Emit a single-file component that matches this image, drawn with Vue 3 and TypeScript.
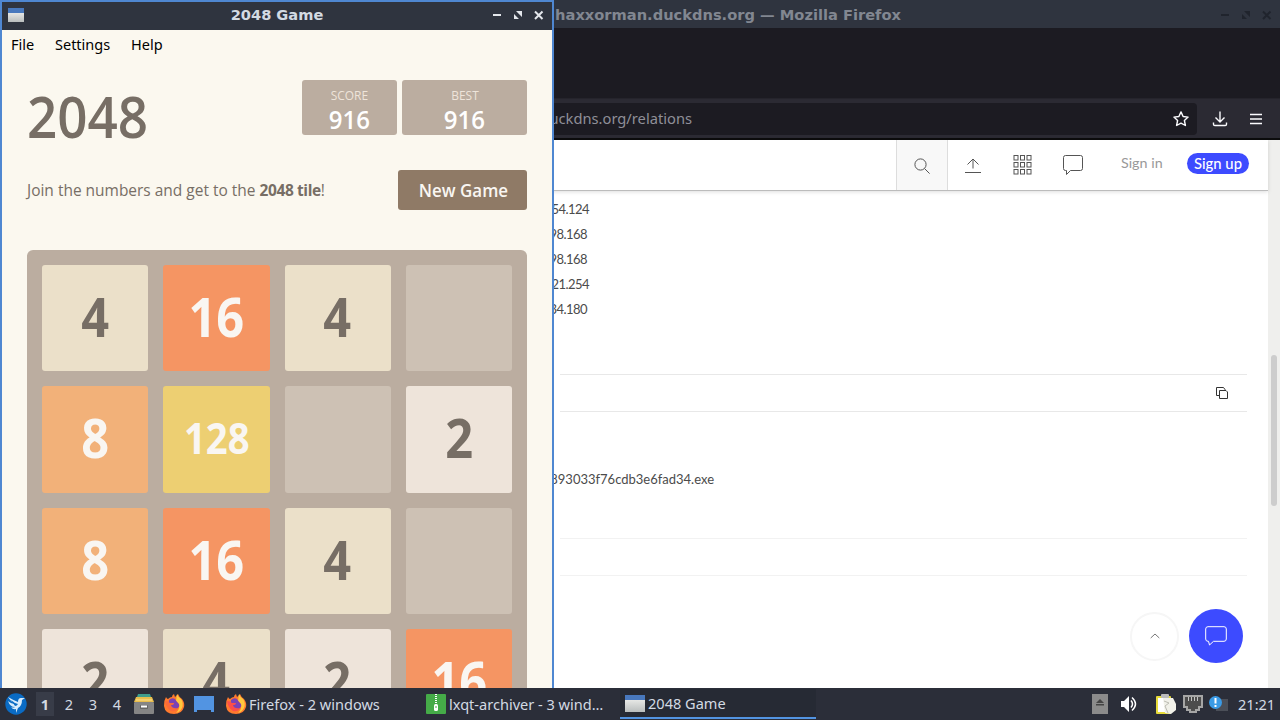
<script setup lang="ts">
interface Tile {
  id: number;
  value: number;
}

const values = [
  4, 16, 4, 0,
  8, 128, 0, 2,
  8, 16, 4, 0,
  2, 4, 2, 16,
];
const tiles: Tile[] = values.map((value, id) => ({ id, value }));

const menus = ["File", "Settings", "Help"];
const addresses = [
  "192.168.54.124",
  "192.168.98.168",
  "192.168.98.168",
  "192.168.21.254",
  "192.168.34.180",
];
const desktops = [1, 2, 3, 4];
</script>

<template>
  <div class="desktop">
    <div class="stage">
      <section class="firefox">
        <header class="ff-title">
          <span class="ff-title-text">haxxorman.duckdns.org — Mozilla Firefox</span>
          <svg class="controls dim" viewBox="0 0 54 12">
            <path d="M1 6h8" />
            <path class="solid" d="M24 2h6v6zM22 5v5h5z" />
            <path d="M43 2.500l7.500 7.500M50.500 2.500L43 10" />
          </svg>
        </header>
        <div class="ff-tabs" />
        <div class="ff-toolbar">
          <div class="ff-url">
            <span class="ff-address">duckdns.org/relations</span>
            <svg class="ff-star" viewBox="0 0 16 16">
              <path d="M8 .9l2.1 4.6 5 .6-3.7 3.4 1 5L8 12.1l-4.4 2.4 1-5L.9 6.1l5-.6z" />
            </svg>
          </div>
          <svg class="ff-download" viewBox="0 0 16 16">
            <path d="M8 .5v10M3.500 6.500L8 11l4.500-4.500M1.500 11.500v1.700q0 1.300 1.300 1.300h10.400q1.300 0 1.300-1.300v-1.700" />
          </svg>
          <svg class="ff-menu" viewBox="0 0 14 12">
            <path d="M1 1.500h12M1 6h12M1 10.500h12" />
          </svg>
        </div>
        <div class="page">
          <div class="page-main">
            <nav class="page-nav">
              <div class="nav-search">
                <svg class="icon16" viewBox="0 0 16 16">
                  <circle cx="6.500" cy="6.500" r="5.600" />
                  <path d="M10.600 10.600l5 5" />
                </svg>
              </div>
              <svg class="nav-upload" viewBox="0 0 16 16">
                <path d="M8 11.500V2.500M2.500 7.500L8 2l5.500 5.500M0 15.500h16" />
              </svg>
              <svg class="nav-grid" viewBox="0 0 19 20">
                <template v-for="y in 3" :key="y">
                  <rect v-for="x in 3" :key="x" :x="x * 6.500 - 5.500" :y="y * 7 - 6.500" width="4" height="4.500" />
                </template>
              </svg>
              <svg class="nav-chat" viewBox="0 0 20 20">
                <path d="M2.500.5h15q2 0 2 2v11q0 2-2 2H7.500L3.500 19.500v-4h-1q-2 0-2-2v-11q0-2 2-2z" />
              </svg>
              <span class="sign-in">Sign in</span>
              <span class="sign-up">Sign up</span>
            </nav>
            <ul class="ips">
              <li v-for="(ip, i) in addresses" :key="i" :class="`ip-${i}`">
                {{ ip }}
              </li>
            </ul>
            <div class="row row-copy">
              <svg class="copy" viewBox="0 0 12 12">
                <path d="M3 8.500H.5V.5h7l1.500 2v1M3.500 3.500h6.500l1.500 1.500v6.500h-8z" />
              </svg>
            </div>
            <div class="hash">893033f76cdb3e6fad34.exe</div>
            <div class="row row-last" />
            <div class="fabs">
              <div class="fab-top">
                <svg viewBox="0 0 10 6">
                  <path d="M.7 5L5 1l4.300 4" />
                </svg>
              </div>
              <div class="fab-chat">
                <svg viewBox="0 0 22 20">
                  <path d="M3 .7h16q2.300 0 2.300 2.300v10q0 2.300-2.300 2.300H8.500L4.500 19l-1-3.700H3Q.7 15.300.7 13V3Q.7.700 3 .7z" />
                </svg>
              </div>
            </div>
          </div>
          <div class="scrollbar">
            <div class="thumb" />
          </div>
        </div>
      </section>

      <section class="game">
        <header class="game-title">
          <i class="win-icon" />
          <span class="game-name">2048 Game</span>
          <svg class="controls" viewBox="0 0 54 12">
            <path d="M1 6h8" />
            <path class="solid" d="M24 2h6v6zM22 5v5h5z" />
            <path d="M43 2.500l7.500 7.500M50.500 2.500L43 10" />
          </svg>
        </header>
        <div class="menubar">
          <span v-for="menu in menus" :key="menu" :class="`menu-${menu.toLowerCase()}`">{{ menu }}</span>
        </div>
        <div class="game-body">
          <div class="heading">
            <h1>2048</h1>
            <div class="score">
              <span class="score-label">SCORE</span>
              <span class="score-value">916</span>
            </div>
            <div class="score best">
              <span class="score-label">BEST</span>
              <span class="score-value">916</span>
            </div>
          </div>
          <div class="above-game">
            <p>Join the numbers and get to the <b>2048 tile</b>!</p>
            <button><span>New Game</span></button>
          </div>
          <div class="board">
            <div v-for="tile in tiles" :key="tile.id" class="tile" :class="`tile-${tile.value}`">
              <span v-if="tile.value">{{ tile.value }}</span>
            </div>
          </div>
        </div>
      </section>
    </div>

    <footer class="taskbar">
      <svg class="bird" viewBox="0 0 22 22">
        <circle cx="11" cy="11" r="10.700" fill="#0a6bc4" />
        <path d="M3 4q3 5 8 7-5 0-8-3 2 6 7 6-2 1-4 0 2 3 5 2v4l2-5q4-2 4-8l3-2-4 0q-3 0-3 4-5-2-10-5z" fill="#d9ecfc" />
        <path d="M6 7q3 3 7 4-1 2-3 2-2-3-4-6z" fill="#0a6bc4" />
      </svg>
      <div class="desktops">
        <span v-for="n in desktops" :key="n" :class="{ current: n === 1 }">{{ n }}</span>
      </div>
      <svg class="cabinet" viewBox="0 0 20 20">
        <path d="M4 0h12l1 3H3z" fill="#3f9d8c" />
        <path d="M2 3h16l2 5H0z" fill="#e8bd4d" />
        <path d="M2 5h16v2H2z" fill="#f4d06f" />
        <rect y="8" width="20" height="12" rx="1" fill="#858585" />
        <rect x="6" y="11" width="8" height="4" rx="1" fill="#666" />
        <rect x="7" y="11.500" width="6" height="2" fill="#fff" />
      </svg>
      <svg class="fox" viewBox="0 0 22 22">
        <path d="M3 4q1 2 2 2 2-2 4-2 0-2 2-3l1 3 3-3q1 3 4 5 3 4 2 8-2 7-10 7-9 0-10-8Q.5 8 3 4z" fill="#ff7a2e" />
        <path d="M14 1q1 3 4 5 3 4 1 9-2 4-6 5 4-4 3-8-1-3-3-4z" fill="#ffc93e" />
        <path d="M6 7q3-3 6-1l2 3q4 3 1 6-3 3-7 0-3-3-2-8z" fill="#7b42b4" />
        <path d="M2 8q3 0 5 2l4 0q0 2-3 2 1 4 7 3-2 4-7 3-5-3-6-10z" fill="#fa6a3a" />
      </svg>
      <svg class="show-desktop" viewBox="0 0 20 16">
        <path d="M0 0h20v16h-3v-2H3v2H0z" fill="#5294e2" />
      </svg>
      <div class="task task-fox">
        <svg class="fox" viewBox="0 0 22 22">
          <path d="M3 4q1 2 2 2 2-2 4-2 0-2 2-3l1 3 3-3q1 3 4 5 3 4 2 8-2 7-10 7-9 0-10-8Q.5 8 3 4z" fill="#ff7a2e" />
          <path d="M14 1q1 3 4 5 3 4 1 9-2 4-6 5 4-4 3-8-1-3-3-4z" fill="#ffc93e" />
          <path d="M6 7q3-3 6-1l2 3q4 3 1 6-3 3-7 0-3-3-2-8z" fill="#7b42b4" />
          <path d="M2 8q3 0 5 2l4 0q0 2-3 2 1 4 7 3-2 4-7 3-5-3-6-10z" fill="#fb4f4a" />
        </svg>
        <span>Firefox - 2 windows</span>
      </div>
      <div class="task task-archiver">
        <svg class="archive" viewBox="0 0 20 20">
          <rect width="20" height="20" rx="1" fill="#45ab48" />
          <path d="M10 0v10" stroke="#fff" stroke-width="2" stroke-dasharray="1 1" />
          <rect x="8" y="10" width="4" height="7" rx="1.500" fill="#fff" />
          <path d="M9.500 12h1v2h-1z" fill="#45ab48" />
        </svg>
        <span>lxqt-archiver - 3 wind…</span>
      </div>
      <div class="task task-game">
        <i class="win-icon big" />
        <span>2048 Game</span>
      </div>
      <div class="tray">
        <svg class="eject" viewBox="0 0 16 20">
          <rect width="16" height="20" fill="#8b8b8b" />
          <path d="M4 9l4-4 4 4zM4 10h8v1.500H4z" fill="#444" />
        </svg>
        <svg class="volume" viewBox="0 0 16 16">
          <path d="M0 5h3l5-5v16l-5-5H0z" fill="#fff" />
          <path d="M10 4.500q3 3.500 0 7M11 1.500q7 6.500 0 13" fill="none" stroke="#fff" stroke-width="1.500" />
        </svg>
        <svg class="clipboard" viewBox="0 0 20 20">
          <rect y="2" width="15" height="18" rx="1" fill="#e8dc3a" />
          <rect x="2" y="4" width="11" height="14" fill="#fff" />
          <rect x="5" width="8" height="4" rx="1" fill="#bbb" />
          <path d="M7 4h10l3 6v6l-5 4-6-1z" fill="#f1f1e9" />
          <path d="M8 7l5 2-4 3 3 7" fill="none" stroke="#bdbdb4" />
        </svg>
        <svg class="network" viewBox="0 0 20 18">
          <path d="M1 1h18v11h-3v3h-3v2H7v-2H4v-3H1z" fill="#4c4c4c" stroke="#a5a5a5" stroke-width="2" />
          <path d="M5.500 2v4M8.500 2v4M11.500 2v4M14.500 2v4" stroke="#c4c4c4" />
        </svg>
        <svg class="updates" viewBox="0 0 20 16">
          <rect x="7" y="3" width="12" height="12" fill="#4b4f58" />
          <circle cx="6.500" cy="6.500" r="6.500" fill="#3b9be6" />
          <path d="M6.500 2v5.500M6.500 9v2" stroke="#fff" stroke-width="2" />
        </svg>
        <span class="clock">21:21</span>
      </div>
    </footer>
  </div>
</template>

<style>
body {
  margin: 0;
  overflow: hidden;
}
</style>

<style scoped>
.desktop {
  display: flex;
  flex-direction: column;
  width: 1280px;
  height: 720px;
  overflow: hidden;
  font-family: "Noto Sans", sans-serif;
}

.desktop svg {
  display: block;
  flex: none;
}

.stage {
  position: relative;
  height: 688px;
  overflow: hidden;
}

/* Firefox window */
.firefox {
  position: absolute;
  top: 0;
  left: 540px;
  display: flex;
  flex-direction: column;
  width: 740px;
  height: 688px;
  background: #fff;
}

.ff-title {
  display: flex;
  align-items: center;
  justify-content: space-between;
  box-sizing: border-box;
  height: 28px;
  padding: 2px 6px 0 0;
  background: #2f343f;
}

.ff-title-text {
  display: flex;
  justify-content: flex-end;
  width: 361px;
  color: #828791;
  font: bold 14.650px/26px "DejaVu Sans", sans-serif;
  white-space: nowrap;
}

.controls {
  width: 54px;
  height: 12px;
  fill: none;
  stroke: #e4e7ec;
  stroke-width: 2;
}

.controls .solid {
  fill: #e4e7ec;
  stroke: none;
}

.controls.dim {
  stroke: #20242d;
}

.controls.dim .solid {
  fill: #20242d;
}

.ff-tabs {
  height: 70px;
  background: #1c1b22;
}

.ff-toolbar {
  display: flex;
  align-items: center;
  box-sizing: border-box;
  height: 42px;
  border-top: 1px solid #25242c;
  border-bottom: 2px solid #0c0c0d;
  background: #2b2a33;
}

.ff-url {
  display: flex;
  align-items: center;
  justify-content: space-between;
  box-sizing: border-box;
  width: 657px;
  height: 32px;
  padding-right: 8px;
  border-radius: 0 4px 4px 0;
  background: #1c1b22;
}

.ff-address {
  display: flex;
  justify-content: flex-end;
  width: 152px;
  margin-bottom: 2px;
  color: #8f8f98;
  font-size: 14.700px;
  white-space: nowrap;
}

.ff-star,
.ff-download,
.ff-menu {
  width: 16px;
  height: 16px;
  fill: none;
  stroke: #fbfbfe;
  stroke-width: 1.400;
  stroke-linejoin: round;
}

.ff-download {
  margin-left: 15px;
}

.ff-menu {
  width: 14px;
  height: 12px;
  margin-left: 21px;
}

.page {
  display: flex;
  flex: 1;
}

.page-main {
  position: relative;
  width: 728px;
  color: #4b4b4b;
  font-family: Lato, sans-serif;
}

.page-nav {
  display: flex;
  align-items: center;
  height: 50px;
  border-bottom: 1px solid #bcbcbc;
  box-shadow: 0 1px 4px #0002;
  fill: none;
  stroke: #555;
  stroke-width: 1;
}

.nav-search {
  display: flex;
  align-items: center;
  justify-content: center;
  width: 50px;
  height: 50px;
  margin-left: 356px;
  border-right: 1px solid #ddd;
  border-left: 1px solid #ddd;
  background: #f8f8f8;
}

.icon16 {
  width: 16px;
  height: 16px;
  margin-top: 2px;
}

.nav-upload {
  width: 16px;
  height: 16px;
  margin-left: 17px;
}

.nav-grid {
  width: 19px;
  height: 20px;
  margin-left: 32px;
}

.nav-chat {
  width: 20px;
  height: 20px;
  margin-left: 31px;
}

.sign-in {
  width: 42px;
  margin: 0 0 4px 38px;
  color: #999;
  font-size: 14.300px;
  line-height: 20px;
  white-space: nowrap;
}

.sign-up {
  width: 62px;
  height: 21px;
  margin: 0 0 4px 24px;
  border-radius: 11px;
  background: #3d4bff;
  color: #fff;
  font-size: 14.800px;
  font-weight: 500;
  line-height: 20px;
  text-align: center;
}

.ips {
  margin: 0;
  padding: 6px 0 0;
  list-style: none;
}

.ips li {
  display: flex;
  justify-content: flex-end;
  width: 47px;
  height: 25px;
  font-size: 13px;
  letter-spacing: -0.550px;
  line-height: 25px;
  white-space: nowrap;
}

.ips .ip-0,
.ips .ip-3 {
  width: 49px;
}

.row {
  box-sizing: border-box;
  height: 38px;
  margin: 52px 21px 0 20px;
  border-top: 1px solid #e8e8e8;
  border-bottom: 1px solid #e8e8e8;
}

.copy {
  width: 12px;
  height: 12px;
  margin: 12px 19px 0 auto;
  fill: none;
  stroke: #333;
}

.hash {
  display: flex;
  justify-content: flex-end;
  width: 174px;
  height: 24px;
  margin-top: 55px;
  font-size: 13px;
  line-height: 24px;
  white-space: nowrap;
}

.row-last {
  margin-top: 47px;
  border-color: #f2f2f2;
}

.fabs {
  display: flex;
  align-items: center;
  justify-content: flex-end;
  gap: 10px;
  margin: 33px 25px 0 0;
}

.fab-top,
.fab-chat {
  display: flex;
  align-items: center;
  justify-content: center;
  box-sizing: border-box;
  width: 49px;
  height: 49px;
  border: 2px solid #f6f6f6;
  border-radius: 50%;
}

.fab-top svg {
  width: 10px;
  height: 6px;
  fill: none;
  stroke: #777;
}

.fab-chat {
  width: 54px;
  height: 54px;
  border: 0;
  background: #3d4bff;
}

.fab-chat svg {
  width: 22px;
  height: 20px;
  fill: none;
  stroke: #fff;
}

.scrollbar {
  box-sizing: border-box;
  width: 12px;
  padding: 215px 3px 0;
  background: #efefed;
}

.thumb {
  height: 151px;
  border-radius: 3px;
  background: #cdcdcd;
}

/* Game window */
.game {
  position: absolute;
  top: 0;
  left: 0;
  display: flex;
  flex-direction: column;
  box-sizing: border-box;
  width: 554px;
  height: 688px;
  border: 2px solid #4f87d1;
  border-bottom: 0;
  background: #fbf8ef;
}

.game-title {
  display: flex;
  flex: none;
  align-items: center;
  box-sizing: border-box;
  height: 28px;
  padding: 0 6px 2px;
  background: #2f343f;
}

.win-icon {
  width: 16px;
  height: 14px;
  background: linear-gradient(#4878bd 0 5px, #e6e7e5 5px, #b9bdbd);
}

.win-icon.big {
  width: 20px;
  height: 17px;
}

.game-name {
  flex: 1;
  padding-left: 38px;
  color: #d3dae3;
  font: bold 14.600px/26px "DejaVu Sans", sans-serif;
  text-align: center;
}

.menubar {
  display: flex;
  flex: none;
  height: 30px;
  padding-left: 9px;
  color: #000;
  font-size: 14.500px;
  line-height: 28px;
}

.menu-file {
  width: 44px;
}

.menu-settings {
  width: 76px;
}

.game-body {
  width: 500px;
  padding: 20px 25px 0;
  color: #776e65;
  font-family: "Open Sans", sans-serif;
}

.heading {
  display: flex;
  gap: 5px;
  height: 90px;
}

h1 {
  flex: 1;
  margin: 5px 0 0;
  font-size: 58.500px;
  font-weight: 650;
  line-height: 60px;
  transform: scaleX(0.905);
  transform-origin: left;
}

.score {
  display: flex;
  flex-direction: column;
  align-items: center;
  width: 95px;
  height: 55px;
  border-radius: 3px;
  background: #bbada0;
  color: #fff;
}

.best {
  width: 125px;
}

.score-label {
  height: 24px;
  color: #eee4da;
  font-size: 13px;
  line-height: 30px;
  transform: scaleX(0.920);
}

.score-value {
  font-size: 25px;
  font-weight: 650;
  line-height: 30px;
  transform: scaleX(0.960);
}

.above-game {
  display: flex;
  justify-content: space-between;
  height: 80px;
}

.above-game p {
  margin: 0;
  font-size: 16px;
  line-height: 40px;
  white-space: nowrap;
  transform: scaleX(0.967);
  transform-origin: left;
}

.above-game b {
  letter-spacing: -0.400px;
}

button {
  width: 129px;
  height: 40px;
  padding: 0 0 0 2px;
  border: 0;
  border-radius: 3px;
  background: #8f7a66;
  color: #f9f6f2;
  font: 600 18px/40px "Open Sans", sans-serif;
  white-space: nowrap;
}

button span {
  display: inline-block;
  transform: scaleX(0.940);
}

.board {
  display: grid;
  grid-template-columns: repeat(4, 106.250px);
  grid-auto-rows: 106.250px;
  gap: 15px;
  padding: 15px;
  border-radius: 6px 6px 0 0;
  background: #bbada0;
}

.tile {
  border-radius: 3px;
  background: #cdc1b4;
  font-size: 53px;
  font-weight: 680;
  line-height: 104px;
  text-align: center;
}

.tile span {
  display: inline-block;
  transform: scaleX(0.920);
}

.tile-2 {
  background: #eee4da;
}

.tile-4 {
  background: #ebe0c9;
}

.tile-8 {
  background: #f2b179;
  color: #f9f6f2;
}

.tile-16 {
  background: #f59563;
  color: #f9f6f2;
}

.tile-128 {
  background: #edcf72;
  color: #f9f6f2;
  font-size: 43px;
}

.tile-128 span {
  padding-left: 2px;
  transform: scaleX(0.890);
}

/* Panel */
.taskbar {
  display: flex;
  align-items: center;
  height: 32px;
  background: #2b2e39;
  color: #d3dae3;
  font-size: 14.550px;
}

.bird {
  width: 22px;
  height: 22px;
  margin-left: 5px;
}

.desktops {
  display: flex;
  gap: 6px;
  margin-left: 9px;
}

.desktops span {
  width: 18px;
  height: 24px;
  line-height: 24px;
  text-align: center;
}

.desktops .current {
  background: #383c48;
  font-weight: 700;
}

.cabinet {
  width: 20px;
  height: 20px;
  margin-left: 8px;
}

.fox {
  width: 22px;
  height: 22px;
  margin-left: 9px;
}

.show-desktop {
  width: 20px;
  height: 16px;
  margin-left: 9px;
}

.task {
  display: flex;
  align-items: center;
  box-sizing: border-box;
  height: 32px;
  white-space: nowrap;
}

.task-fox {
  width: 201px;
  margin-left: 11px;
}

.task-fox .fox {
  margin: 0 2px 0 0;
}

.task-archiver {
  width: 194px;
}

.archive {
  width: 20px;
  height: 20px;
  margin-right: 3px;
}

.task-game {
  gap: 3px;
  width: 196px;
  height: 30px;
  padding: 0 0 0 5px;
  border-bottom: 2px solid #5294e2;
  background: #262a34;
}

.tray {
  display: flex;
  flex: 1;
  align-items: center;
  justify-content: flex-end;
  padding-right: 5px;
}

.eject {
  width: 16px;
  height: 20px;
}

.volume {
  width: 16px;
  height: 16px;
  margin-left: 13px;
}

.clipboard {
  width: 20px;
  height: 20px;
  margin-left: 19px;
}

.network {
  width: 20px;
  height: 18px;
  margin-left: 7px;
}

.updates {
  width: 20px;
  height: 16px;
  margin-left: 6px;
}

.clock {
  width: 37px;
  margin-left: 9px;
}
</style>
